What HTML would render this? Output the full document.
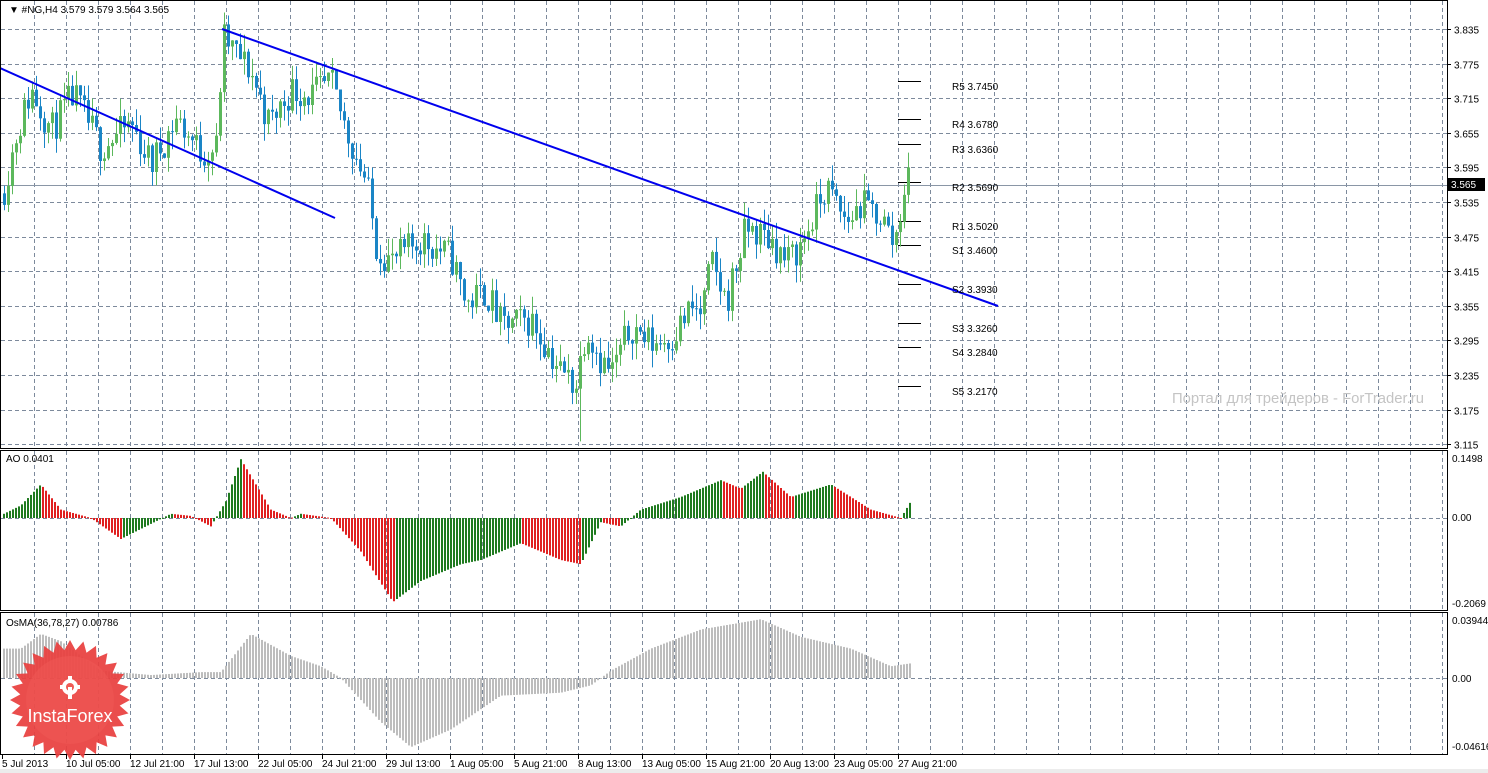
<!DOCTYPE html>
<html><head><meta charset="utf-8"><style>
html,body{margin:0;padding:0;background:#fff;width:1488px;height:773px;overflow:hidden;font-family:"Liberation Sans",sans-serif}
svg{position:absolute;left:0;top:0}
text{font-family:"Liberation Sans","DejaVu Sans",sans-serif;font-size:10px;fill:#000}
</style></head><body>
<svg id="s" width="1488" height="773" xmlns="http://www.w3.org/2000/svg">
<rect x="0" y="0" width="1488" height="773" fill="#fff"/>
<rect x="0" y="769" width="1488" height="4" fill="#ececec"/>
<g id="grid" stroke="#7d8a9c" stroke-dasharray="4,3" stroke-width="1"></g>
<line x1="0" y1="185.5" x2="1447" y2="185.5" stroke="#8a96a6"/>
<g id="pivots" stroke="#000"></g>
<g id="candles"></g>
<g id="ao"></g>
<g id="osma"></g>
<line x1="0" y1="68" x2="335" y2="218" stroke="#0000ee" stroke-width="2"/>
<line x1="222" y1="29" x2="998" y2="306" stroke="#0000ee" stroke-width="2"/>
<g fill="none" stroke="#000" stroke-width="1">
<rect x="0.5" y="0.5" width="1447" height="448"/>
<rect x="0.5" y="450.5" width="1447" height="160"/>
<rect x="0.5" y="612.5" width="1447" height="142"/>
</g>
<rect x="1447" y="178" width="38" height="13" fill="#000"/>
<text x="1451" y="188" fill="#fff" style="fill:#fff">3.565</text>
<text x="9" y="13">▼ #NG,H4  3.579 3.579 3.564 3.565</text>
<text x="6" y="462">AO 0.0401</text>
<text x="6" y="626">OsMA(36,78,27) 0.00786</text>
<g id="ylab"></g>
<text x="1452" y="462">0.1498</text>
<text x="1452" y="521">0.00</text>
<text x="1452" y="607">-0.2069</text>
<text x="1452" y="624">0.03944</text>
<text x="1452" y="682">0.00</text>
<text x="1452" y="750">-0.04616</text>
<g>
<text x="952" y="90">R5 3.7450</text>
<text x="952" y="128">R4 3.6780</text>
<text x="952" y="153">R3 3.6360</text>
<text x="952" y="191">R2 3.5690</text>
<text x="952" y="230">R1 3.5020</text>
<text x="952" y="254">S1 3.4600</text>
<text x="952" y="293">S2 3.3930</text>
<text x="952" y="332">S3 3.3260</text>
<text x="952" y="356">S4 3.2840</text>
<text x="952" y="395">S5 3.2170</text>
</g>
<text x="1172" y="403" textLength="252" lengthAdjust="spacingAndGlyphs" style="font-size:15px;fill:#c4c4c4">Портал для трейдеров - ForTrader.ru</text>
<g id="tl"></g>
<g transform="translate(70,700)">
<polygon id="star" fill="#e8403e" opacity="0.93"/>
<circle r="44" fill="#f05a55" opacity="0.5"/>
<g fill="#fff">
<circle cx="0" cy="-13" r="8"/>
<circle cx="0" cy="-13" r="4" fill="#f05a55"/>
<rect x="-2" y="-13" width="4" height="12"/>
<rect x="-10" y="-15" width="3" height="4"/><rect x="7" y="-15" width="3" height="4"/>
<rect x="-2" y="-24" width="4" height="4"/>
</g>
<text x="0" y="22" text-anchor="middle" style="font-size:18px;fill:#fff">InstaForex</text>
</g>
</svg>
<script>
var NS="http://www.w3.org/2000/svg";
function el(p,t,a){var e=document.createElementNS(NS,t);for(var k in a)e.setAttribute(k,a[k]);p.appendChild(e);return e;}
var g=document.getElementById('grid');
for(var x=34;x<1447;x+=32){el(g,'line',{x1:x+.5,y1:1,x2:x+.5,y2:448});el(g,'line',{x1:x+.5,y1:451,x2:x+.5,y2:610});el(g,'line',{x1:x+.5,y1:613,x2:x+.5,y2:754});}
function py(p){return 29+(3.835-p)*576.7;}
var yl=document.getElementById('ylab');
var prices=[3.835,3.775,3.715,3.655,3.595,3.535,3.475,3.415,3.355,3.295,3.235,3.175,3.115];
prices.forEach(function(p){var y=Math.round(py(p))+.5;el(g,'line',{x1:1,y1:y,x2:1447,y2:y});el(yl,'line',{x1:1447,y1:y,x2:1451,y2:y,stroke:'#000'});var t=el(yl,'text',{x:1454,y:y+4});t.textContent=p.toFixed(3);});
el(g,'line',{x1:1,y1:518.5,x2:1447,y2:518.5});el(g,'line',{x1:1,y1:678.5,x2:1447,y2:678.5});
var pv=document.getElementById('pivots');
[81,119,144,182,221,245,284,323,347,386].forEach(function(y){el(pv,'line',{x1:898,y1:y+.5,x2:921,y2:y+.5});});
var tl=document.getElementById('tl');
var labs=["5 Jul 2013","10 Jul 05:00","12 Jul 21:00","17 Jul 13:00","22 Jul 05:00","24 Jul 21:00","29 Jul 13:00","1 Aug 05:00","5 Aug 21:00","8 Aug 13:00","13 Aug 05:00","15 Aug 21:00","20 Aug 13:00","23 Aug 05:00","27 Aug 21:00"];
labs.forEach(function(l,i){var x=2+i*64;el(tl,'line',{x1:x+.5,y1:755,x2:x+.5,y2:759,stroke:'#000'});var t=el(tl,'text',{x:x,y:767});t.textContent=l;});
function interp(k,x){for(var i=0;i<k.length-1;i++){if(x<=k[i+1][0]){var a=k[i],b=k[i+1];return a[1]+(b[1]-a[1])*(x-a[0])/(b[0]-a[0]);}}return k[k.length-1][1];}
var seed=11;function rnd(){seed=(seed*16807)%2147483647;return seed/2147483647;}
var P=[[3,3.56],[15,3.65],[30,3.73],[50,3.66],[72,3.72],[100,3.63],[130,3.67],[150,3.60],[175,3.68],[200,3.62],[215,3.63],[222,3.82],[250,3.76],[268,3.67],[290,3.73],[310,3.72],[330,3.74],[345,3.66],[365,3.57],[375,3.46],[390,3.43],[420,3.47],[450,3.44],[465,3.36],[485,3.38],[500,3.32],[530,3.33],[560,3.24],[575,3.22],[585,3.32],[600,3.26],[610,3.24],[630,3.32],[650,3.29],[670,3.30],[690,3.35],[700,3.34],[710,3.43],[725,3.36],[745,3.49],[770,3.47],[785,3.43],[800,3.46],[825,3.56],[845,3.50],[860,3.53],[880,3.51],[893,3.46],[905,3.58],[910,3.565]];
var c=document.getElementById('candles');var prev=3.55;
for(var x=3;x<=910;x+=4){var cl=interp(P,x)+(rnd()-.5)*0.06;var o=prev;var hi=Math.max(o,cl)+rnd()*0.03,lo=Math.min(o,cl)-rnd()*0.03;
if(x>=579&&x<583)lo=3.12;
var col=cl>=o?'#5cb85c':'#1a85c6';
el(c,'line',{x1:x+1.5,y1:py(hi),x2:x+1.5,y2:py(lo),stroke:col});var t=Math.min(py(o),py(cl)),h=Math.max(1,Math.abs(py(o)-py(cl)));el(c,'rect',{x:x,y:t,width:3,height:h,fill:col});prev=cl;}
var A=[[3,0.01],[20,0.03],[40,0.08],[60,0.02],[90,0.0],[120,-0.05],[145,-0.02],[170,0.01],[190,0.005],[210,-0.02],[225,0.04],[240,0.14],[270,0.02],[290,0.0],[300,0.01],[330,0.0],[360,-0.08],[392,-0.20],[420,-0.15],[460,-0.11],[480,-0.10],[520,-0.06],[560,-0.10],[580,-0.11],[600,-0.01],[620,-0.02],[640,0.02],[680,0.05],[720,0.09],[740,0.07],[762,0.11],[790,0.05],[830,0.08],[870,0.02],[900,0.0],[910,0.04]];
var ao=document.getElementById('ao');var pa=0;
for(var x=3;x<=910;x+=3){var v=interp(A,x);var col=v>=pa?'#1f7a1f':'#e02020';var y0=518,y1=518-v*420;el(ao,'rect',{x:x,y:Math.min(y0,y1),width:2,height:Math.max(1,Math.abs(y1-y0)),fill:col});pa=v;}
var O=[[3,0.02],[20,0.02],[40,0.03],[60,0.025],[100,0.005],[150,0.002],[200,0.004],[220,0.004],[250,0.03],[290,0.015],[320,0.008],[340,0.0],[380,-0.03],[410,-0.047],[450,-0.035],[500,-0.012],[560,-0.01],[590,-0.005],[610,0.005],[650,0.02],[700,0.033],[760,0.04],[800,0.028],[850,0.02],[890,0.008],[910,0.01]];
var os=document.getElementById('osma');
for(var x=3;x<=910;x+=3){var v=interp(O,x);var y1=678-v*1470;el(os,'rect',{x:x,y:Math.min(678,y1),width:2,height:Math.max(1,Math.abs(y1-678)),fill:'#bdbdbd'});}
var pts=[];for(var i=0;i<56;i++){var r=i%2?50:60;var a=i*Math.PI/28;pts.push((r*Math.cos(a)).toFixed(1)+','+(r*Math.sin(a)).toFixed(1));}
document.getElementById('star').setAttribute('points',pts.join(' '));
</script>
</body></html>
